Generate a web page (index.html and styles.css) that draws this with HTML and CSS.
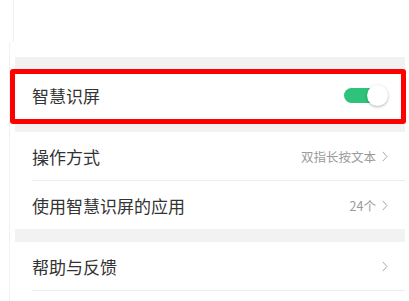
FILE: index.html
```html
<!DOCTYPE html>
<html lang="zh">
<head>
<meta charset="utf-8">
<link rel="stylesheet" href="styles.css">
</head>
<body>
<div class="top-strip"></div>
<div class="screen">
  <div class="gap gap-top"></div>
  <div class="row row-switch highlighted">
    <span class="label">智慧识屏</span>
    <span class="toggle"><span class="thumb"></span></span>
  </div>
  <div class="gap gap-small"></div>
  <div class="row divided">
    <span class="label">操作方式</span>
    <span class="value">双指长按文本<svg class="chev" width="6" height="11" viewBox="0 0 6 11"><path d="M0.7 0.8 L5 5.5 L0.7 10.2" fill="none" stroke="#a8a8a8" stroke-width="1"/></svg></span>
  </div>
  <div class="row">
    <span class="label">使用智慧识屏的应用</span>
    <span class="value">24个<svg class="chev" width="6" height="11" viewBox="0 0 6 11"><path d="M0.7 0.8 L5 5.5 L0.7 10.2" fill="none" stroke="#a8a8a8" stroke-width="1"/></svg></span>
  </div>
  <div class="gap gap-mid"></div>
  <div class="row divided">
    <span class="label">帮助与反馈</span>
    <span class="value"><svg class="chev" width="6" height="11" viewBox="0 0 6 11"><path d="M0.7 0.8 L5 5.5 L0.7 10.2" fill="none" stroke="#a8a8a8" stroke-width="1"/></svg></span>
  </div>
</div>
</body>
</html>
```
FILE: styles.css
```css
* { box-sizing: border-box; }
html, body {
  margin: 0;
  padding: 0;
  background: #fff;
  width: 409px;
  height: 301px;
  overflow: hidden;
  font-family: "Noto Sans CJK SC", "Noto Sans", sans-serif;
}
.top-strip {
  height: 42px;
  margin-left: 13px;
  border-left: 1px solid #f1f1f1;
}
.screen {
  margin-left: 9px;
  border-left: 1px solid #f1f1f1;
  padding-left: 5px;
  padding-right: 4px;
  padding-top: 15px;
  height: 259px;
}
.gap { background: #f2f2f2; }
.gap-top { height: 12px; }
.gap-small { height: 8px; }
.gap-mid { height: 13px; }
.row {
  display: flex;
  align-items: center;
  justify-content: space-between;
  height: 48px;
  padding-left: 17px;
  padding-right: 17px;
  background: #fff;
  position: relative;
}
.row-switch { height: 55px; }
.row.divided::before {
  content: "";
  position: absolute;
  left: 17px;
  right: 0;
  bottom: 0;
  height: 1px;
  background: #ececec;
}
.row.divided { height: 49px; }
.highlighted::after {
  content: "";
  position: absolute;
  left: -5px;
  right: -1px;
  top: 0;
  bottom: 0;
  border: 5px solid #ff0000;
  border-radius: 3px;
}
.label {
  font-size: 17px;
  color: #333;
}
.row-switch .label { margin-top: -3px; }
.value {
  display: flex;
  align-items: center;
  font-size: 12.5px;
  color: #9a9a9a;
}
.chev { margin-left: 6px; }
.toggle {
  position: relative;
  width: 43px;
  height: 15px;
  background: #2ec27b;
  border-radius: 8px;
  margin-right: 1px;
  margin-top: -3px;
}
.thumb {
  position: absolute;
  right: -1px;
  top: -3px;
  width: 21px;
  height: 21px;
  border-radius: 50%;
  background: #fff;
  box-shadow: 0 1px 3px rgba(0,0,0,0.3);
}
```
